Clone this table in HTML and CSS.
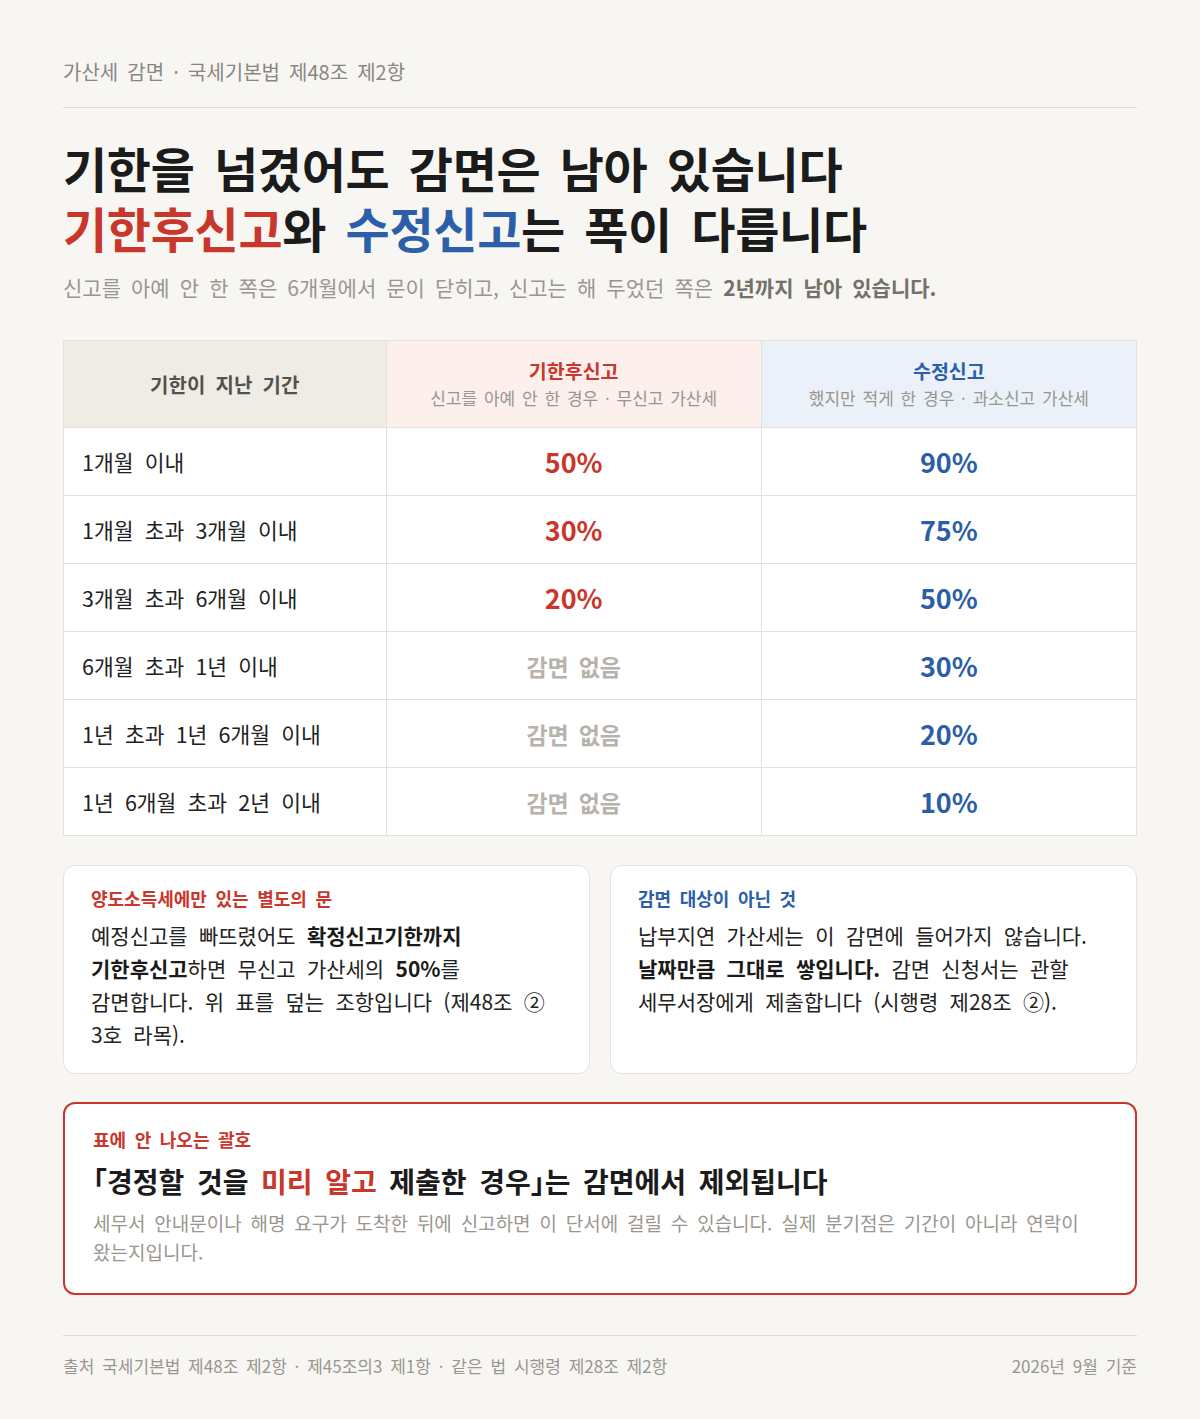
FILE: index.html
```html
<!DOCTYPE html>
<html lang="ko">
<head>
<meta charset="utf-8">
<title>가산세 감면</title>
<link rel="stylesheet" href="styles.css">
</head>
<body>
<div class="page">
  <header class="top">가산세 감면 · 국세기본법 제48조 제2항</header>

  <h1 class="title">
    <span class="line">기한을 넘겼어도 감면은 남아 있습니다</span>
    <span class="line"><span class="red">기한후신고</span>와 <span class="blue">수정신고</span>는 폭이 다릅니다</span>
  </h1>
  <p class="lead">신고를 아예 안 한 쪽은 6개월에서 문이 닫히고, 신고는 해 두었던 쪽은 <b>2년까지 남아 있습니다.</b></p>

  <div class="table">
    <div class="row head">
      <div class="cell c1">기한이 지난 기간</div>
      <div class="cell c2"><span class="th red">기한후신고</span><span class="sub">신고를 아예 안 한 경우 · 무신고 가산세</span></div>
      <div class="cell c3"><span class="th blue">수정신고</span><span class="sub">했지만 적게 한 경우 · 과소신고 가산세</span></div>
    </div>
    <div class="row"><div class="cell label">1개월 이내</div><div class="cell pct red">50%</div><div class="cell pct blue">90%</div></div>
    <div class="row"><div class="cell label">1개월 초과 3개월 이내</div><div class="cell pct red">30%</div><div class="cell pct blue">75%</div></div>
    <div class="row"><div class="cell label">3개월 초과 6개월 이내</div><div class="cell pct red">20%</div><div class="cell pct blue">50%</div></div>
    <div class="row"><div class="cell label">6개월 초과 1년 이내</div><div class="cell pct none">감면 없음</div><div class="cell pct blue">30%</div></div>
    <div class="row"><div class="cell label">1년 초과 1년 6개월 이내</div><div class="cell pct none">감면 없음</div><div class="cell pct blue">20%</div></div>
    <div class="row"><div class="cell label">1년 6개월 초과 2년 이내</div><div class="cell pct none">감면 없음</div><div class="cell pct blue">10%</div></div>
  </div>

  <div class="cards">
    <div class="card">
      <div class="card-label red">양도소득세에만 있는 별도의 문</div>
      <p class="card-body">예정신고를 빠뜨렸어도 <b>확정신고기한까지 기한후신고</b>하면 무신고 가산세의 <b>50%</b>를 감면합니다. 위 표를 덮는 조항입니다 (제48조 ② 3호 라목).</p>
    </div>
    <div class="card">
      <div class="card-label blue">감면 대상이 아닌 것</div>
      <p class="card-body">납부지연 가산세는 이 감면에 들어가지 않습니다. <b>날짜만큼 그대로 쌓입니다.</b> 감면 신청서는 관할 세무서장에게 제출합니다 (시행령 제28조 ②).</p>
    </div>
  </div>

  <div class="alert">
    <div class="alert-label">표에 안 나오는 괄호</div>
    <div class="alert-title"><span class="br">「</span>경정할 것을 <span class="red">미리 알고</span> 제출한 경우<span class="br">」</span>는 감면에서 제외됩니다</div>
    <p class="alert-body">세무서 안내문이나 해명 요구가 도착한 뒤에 신고하면 이 단서에 걸릴 수 있습니다. 실제 분기점은 기간이 아니라 연락이 왔는지입니다.</p>
  </div>

  <footer class="foot">
    <span>출처 국세기본법 제48조 제2항 · 제45조의3 제1항 · 같은 법 시행령 제28조 제2항</span>
    <span>2026년 9월 기준</span>
  </footer>
</div>
</body>
</html>
```

FILE: styles.css
```css
* { box-sizing: border-box; }
html, body { margin: 0; padding: 0; }
body {
  background: #f7f6f2;
  font-family: "Noto Sans CJK KR", "Noto Sans", sans-serif;
  color: #222;
  word-spacing: 0.22em;
  word-break: keep-all;
}
.page {
  width: 1200px;
  padding: 58px 63px 40px;
}
.red { color: #c9362c; }
.blue { color: #2b60a9; }

.top {
  font-size: 20px;
  line-height: 28px;
  color: #8a8782;
  padding-bottom: 21px;
  border-bottom: 1px solid #dedbd5;
}

.title {
  margin: 29px 0 0;
  font-size: 48px;
  line-height: 60px;
  font-weight: 700;
  color: #1b1b1b;
  letter-spacing: -0.3px;
  word-spacing: 0.13em;
}
.title .line { display: block; }

.lead {
  margin: 15px 0 0;
  font-size: 21px;
  line-height: 30px;
  color: #9a968f;
  word-spacing: 0.2em;
}
.lead b { color: #74706a; font-weight: 700; }

.table {
  margin-top: 38px;
  border: 1px solid #e4e1da;
  background: #fff;
}
.row {
  display: grid;
  grid-template-columns: 30% 35% 35%;
  height: 68px;
  border-top: 1px solid #e4e1da;
}
.row.head { height: 86px; border-top: none; }
.cell {
  display: flex;
  align-items: center;
  justify-content: center;
  border-left: 1px solid #e4e1da;
}
.cell:first-child { border-left: none; }
.head .c1 {
  background: #efece6;
  font-size: 20px;
  font-weight: 700;
  color: #55524d;
  letter-spacing: 0.2px;
  word-spacing: 0.2em;
}
.head .c2 { background: #fcefec; flex-direction: column; }
.head .c3 { background: #eaf1f9; flex-direction: column; }
.th { font-size: 19.5px; font-weight: 700; line-height: 28px; }
.sub { font-size: 17px; line-height: 26px; color: #9a968f; margin-top: 0; word-spacing: 0.12em; }
.cell.label {
  justify-content: flex-start;
  padding-left: 18px;
  font-size: 21.5px;
  color: #222;
  word-spacing: 0.24em;
}
.cell.pct { font-size: 27px; font-weight: 700; }
.cell.pct.red { color: #c9362c; }
.cell.pct.blue { color: #2b5ea6; }
.cell.pct.none { color: #b7b3ac; font-size: 23px; }

.cards {
  margin-top: 29px;
  display: grid;
  grid-template-columns: 1fr 1fr;
  gap: 20px;
}
.card {
  background: #fff;
  border: 1px solid #e6e3dd;
  border-radius: 12px;
  padding: 19px 27px 22px;
  min-height: 209px;
}
.card-label {
  font-size: 18px;
  line-height: 26px;
  font-weight: 700;
}
.card-body {
  margin: 8px 0 0;
  font-size: 21px;
  line-height: 33px;
  color: #222;
  word-spacing: 0.26em;
}
.card-body b { font-weight: 700; color: #1a1a1a; }

.alert {
  margin-top: 28px;
  border: 2px solid #c9362c;
  border-radius: 12px;
  background: #fff;
  padding: 22px 28px 27px;
}
.alert-label {
  font-size: 18px;
  line-height: 26px;
  font-weight: 700;
  color: #c9362c;
}
.alert-title {
  margin-top: 9px;
  font-size: 28px;
  line-height: 40px;
  font-weight: 700;
  color: #1b1b1b;
  word-spacing: 0.17em;
}
.alert-title .br { font-feature-settings: "halt" 1; }
.alert-body {
  margin: 7px 0 0;
  font-size: 19px;
  line-height: 29px;
  color: #9a968f;
}

.foot {
  margin-top: 40px;
  border-top: 1px solid #dedbd5;
  padding-top: 18px;
  display: flex;
  justify-content: space-between;
  font-size: 17px;
  line-height: 24px;
  color: #9a968f;
  word-spacing: 0.18em;
}
```
